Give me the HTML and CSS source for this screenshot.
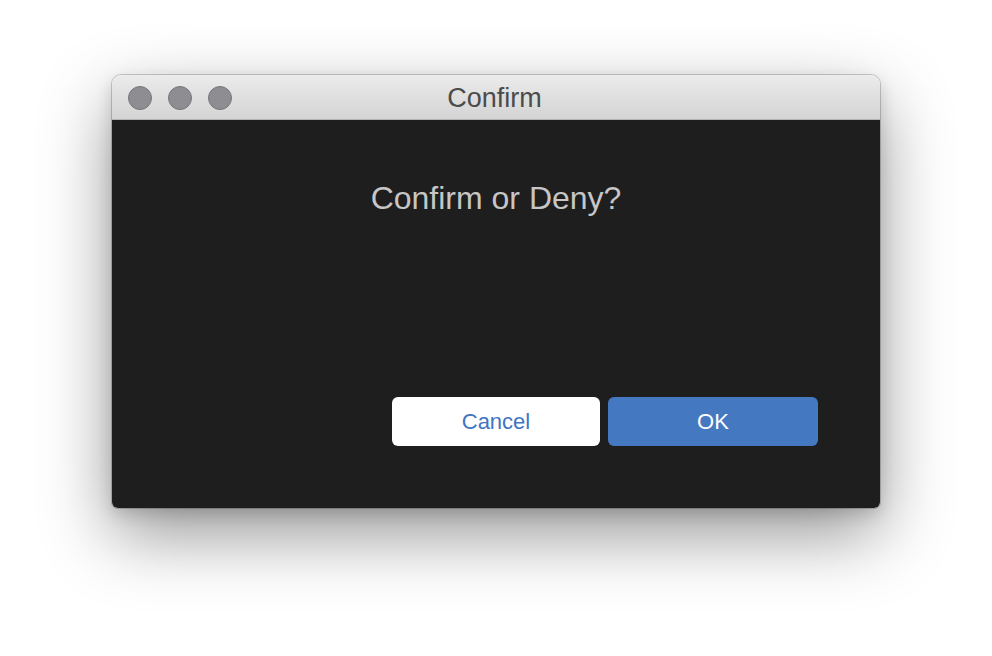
FILE: index.html
```html
<!DOCTYPE html>
<html>
<head>
<meta charset="utf-8">
<link rel="stylesheet" href="styles.css">
</head>
<body>
<div class="window">
  <div class="titlebar">
    <div class="lights">
      <span class="light"></span>
      <span class="light"></span>
      <span class="light"></span>
    </div>
    <div class="title">Confirm</div>
    <div></div>
  </div>
  <div class="content">
    <div class="message">Confirm or Deny?</div>
    <div class="buttons">
      <button class="btn cancel">Cancel</button>
      <button class="btn ok">OK</button>
    </div>
  </div>
</div>
</body>
</html>
```
FILE: styles.css
```css
html, body {
  margin: 0;
  padding: 0;
  background: #ffffff;
}
body {
  width: 992px;
  height: 656px;
  padding: 75px 112px 0;
  box-sizing: border-box;
  font-family: "Liberation Sans", Arial, sans-serif;
  overflow: hidden;
}
.window {
  width: 768px;
  height: 433px;
  border-radius: 9px 9px 6px 6px;
  box-shadow: 0 0 0 1px rgba(0,0,0,0.18), 0 26px 70px rgba(0,0,0,0.42), 0 6px 16px rgba(0,0,0,0.14);
  display: flex;
  flex-direction: column;
  overflow: hidden;
}
.titlebar {
  height: 44px;
  border-bottom: 1px solid #b2b2b2;
  background: linear-gradient(#ebebeb, #d4d4d4);
  display: grid;
  grid-template-columns: 1fr auto 1fr;
  align-items: center;
}
.lights {
  display: flex;
  gap: 16px;
  padding-left: 16px;
  padding-top: 2px;
}
.light {
  width: 22px;
  height: 22px;
  border-radius: 50%;
  background: #8e8d92;
  border: 1px solid #76757a;
}
.title {
  font-size: 27px;
  color: #4b4b4b;
  padding-top: 2px;
  padding-right: 3px;
}
.content {
  flex: 1;
  background: #1e1e1e;
  display: flex;
  flex-direction: column;
  padding: 60px 62px 62px;
}
.message {
  text-align: center;
  font-size: 32px;
  color: #c6c6c6;
}
.buttons {
  margin-top: auto;
  display: flex;
  justify-content: flex-end;
  gap: 8px;
}
.btn {
  height: 49px;
  border: none;
  border-radius: 6px;
  font-family: "Liberation Sans", Arial, sans-serif;
  font-size: 22px;
  padding: 0;
}
.cancel {
  width: 208px;
  background: #ffffff;
  color: #3f75c2;
}
.ok {
  width: 210px;
  background: #4478c1;
  color: #ffffff;
}
```
